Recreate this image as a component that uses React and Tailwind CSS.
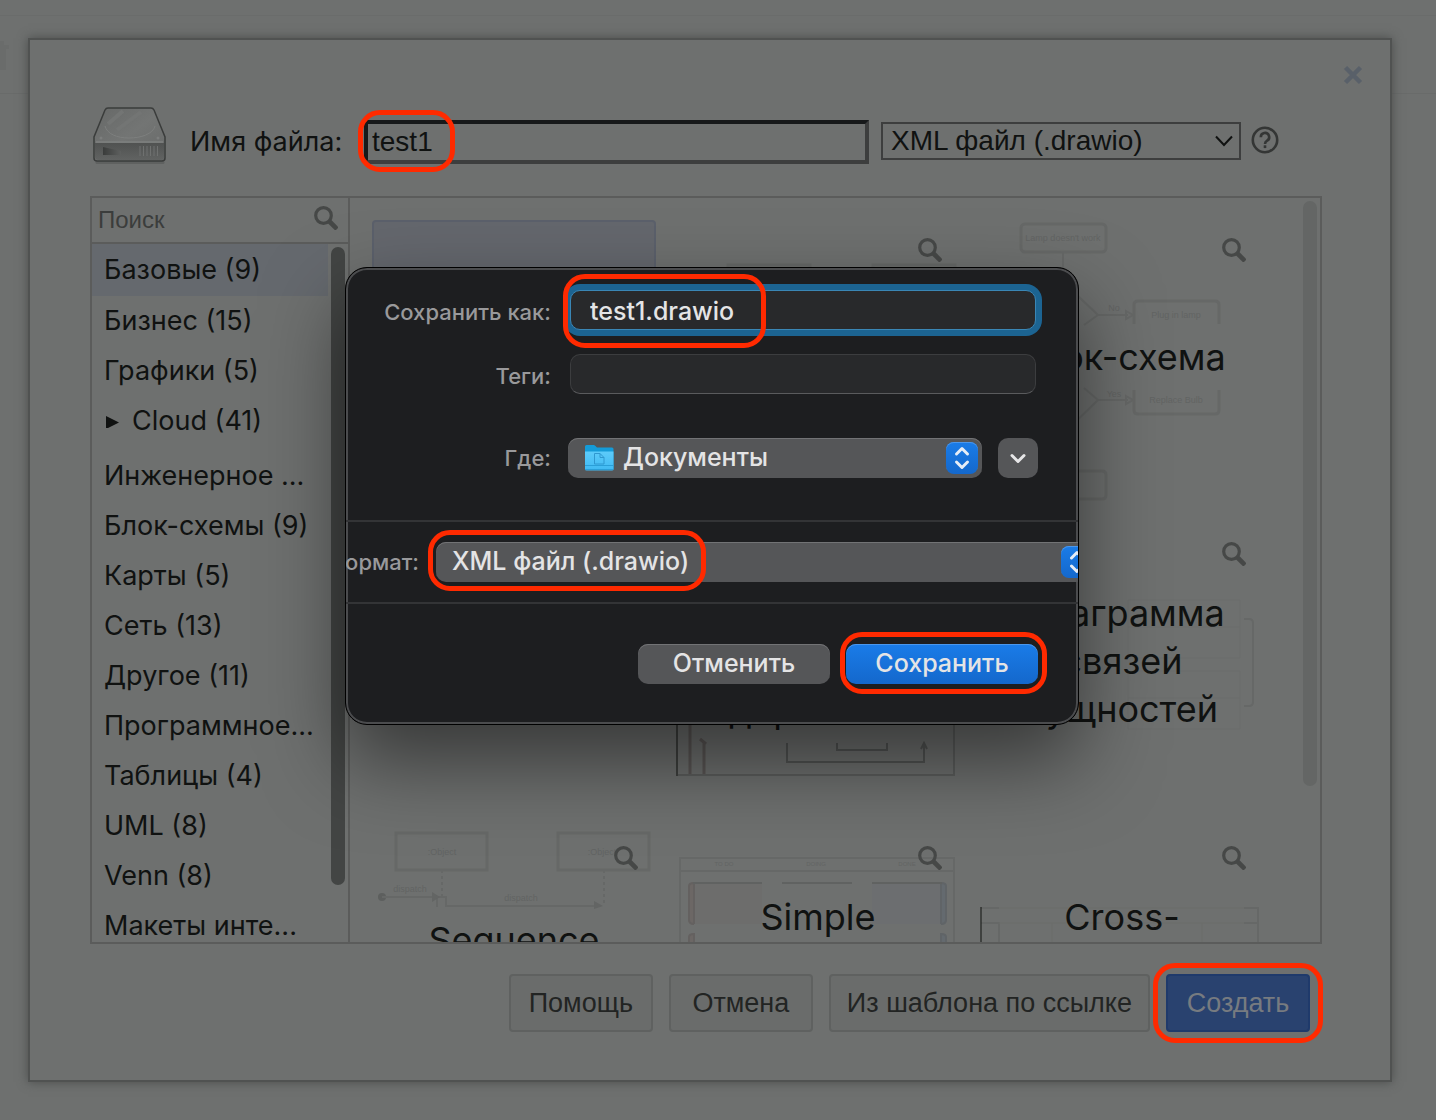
import React from "react";

const categories = [
  { name: "Базовые (9)", selected: true },
  { name: "Бизнес (15)" },
  { name: "Графики (5)" },
  { name: "Cloud (41)", expandable: true },
  { name: "Инженерное ..." },
  { name: "Блок-схемы (9)" },
  { name: "Карты (5)" },
  { name: "Сеть (13)" },
  { name: "Другое (11)" },
  { name: "Программное..." },
  { name: "Таблицы (4)" },
  { name: "UML (8)" },
  { name: "Venn (8)" },
  { name: "Макеты инте..." },
];

function Magnifier() {
  return (
    <svg viewBox="0 0 24 24" className="block size-6" fill="none" stroke="#464847" aria-hidden="true">
      <circle cx="9.500" cy="9.500" r="7.800" strokeWidth="3.200" />
      <path d="M15.500 15.500L23 23" strokeWidth="4.600" />
    </svg>
  );
}

function DriveIcon() {
  return (
    <svg viewBox="-3 0 76 60" className="block h-15 w-19 shrink-0" aria-hidden="true">
      <defs>
        <linearGradient id="drive-lid" x1="0" y1="0" x2="1" y2="1">
          <stop offset="0" stopColor="#666867" />
          <stop offset="0.5" stopColor="#737574" />
          <stop offset="1" stopColor="#676968" />
        </linearGradient>
        <linearGradient id="drive-front" x1="0" y1="0" x2="0" y2="1">
          <stop offset="0" stopColor="#505251" />
          <stop offset="1" stopColor="#616362" />
        </linearGradient>
        <linearGradient id="drive-slot" x1="0" y1="0" x2="1" y2="0">
          <stop offset="0" stopColor="#3a3c3b" />
          <stop offset="1" stopColor="#5e605f" />
        </linearGradient>
      </defs>
      <path d="M4 56.500h66" stroke="#5f6160" strokeWidth="3" strokeLinecap="round" />
      <path d="M15 2h43q2 0 3 2l11 27v21q0 3-3 3H4q-3 0-3-3V31L12 4q1-2 3-2z" fill="url(#drive-lid)" stroke="#3a3c3b" strokeWidth="1.500" />
      <path d="M2 37h69v14q0 3-3 3H5q-3 0-3-3z" fill="url(#drive-front)" />
      <path d="M3 36h67" stroke="#7e807f" strokeWidth="1.500" />
      <path d="M12 20c2 8 12 12 24 12s24-4 26-12" fill="none" stroke="#7d7f7e" />
      <path d="M15 18L30 5M24 24L48 6" stroke="#737574" strokeWidth="4" />
      <circle cx="8" cy="32" r="1.500" fill="#7c7e7d" />
      <circle cx="65" cy="32" r="1.500" fill="#7c7e7d" />
      <path d="M10 41l18 4v4H10z" fill="url(#drive-slot)" />
      <path d="M47 40v10M50.500 40v10M54 40v10M57.500 40v10M61 40v10M64.500 40v10" stroke="#6f7170" />
    </svg>
  );
}

function FolderIcon() {
  return (
    <svg viewBox="0 0 30 28" className="block h-7 w-[30px]" aria-hidden="true">
      <defs>
        <linearGradient id="folder-face" x1="0" y1="0" x2="0" y2="1">
          <stop offset="0" stopColor="#5dcbfa" />
          <stop offset="1" stopColor="#3fb9f2" />
        </linearGradient>
      </defs>
      <path d="M1 2.500Q1 1 2.500 1h7q1 0 2 1l1.500 1.500h15q1.500 0 1.500 1.500v20H1z" fill="#149bd8" />
      <path d="M1 7.500h28.500V25q0 1.500-1.500 1.500H2.500Q1 26.500 1 25z" fill="url(#folder-face)" />
      <path d="M1 21.500h28.500M1 25.500h28.500" stroke="#2a9fd8" />
      <path d="M10.500 9.500h5.500l4 4V20h-9.500zM16 9.500v4h4" fill="none" stroke="#2f98d0" />
    </svg>
  );
}

function Stepper() {
  return (
    <span className="flex h-8 w-8 shrink-0 items-center justify-center rounded-lg bg-linear-to-b from-[#1a7ce8] to-[#1468cc] shadow-[inset_0_1px_0_#4b97ec]">
      <svg viewBox="0 0 16 24" className="h-6 w-4" fill="none" stroke="#e6edf6" strokeWidth="3" strokeLinecap="round" strokeLinejoin="round" aria-hidden="true">
        <path d="M2.500 8L8 2.500 13.500 8M2.500 16L8 21.500 13.500 16" />
      </svg>
    </span>
  );
}

function Sketch({ children }) {
  return (
    <svg viewBox="0 0 284 284" className="absolute inset-0 size-full overflow-visible" fill="none" stroke="#666867" strokeWidth="3" fontFamily="Liberation Sans, sans-serif" fontSize="9" aria-hidden="true">
      {children}
    </svg>
  );
}

function SketchText({ x, y, children }) {
  return (
    <text x={x} y={y} fill="#626463" stroke="none" textAnchor="middle">
      {children}
    </text>
  );
}

const templates = [
  { id: "blank", selected: true },
  {
    id: "classes",
    zoom: true,
    art: <path d="M52 60V45h82v15M197 60V45h82v15" />,
  },
  {
    id: "flow",
    label: "Блок-схема",
    place: "pt-[113px]",
    zoom: true,
    art: (
      <>
        <rect x="41" y="4" width="85" height="28" rx="4" />
        <SketchText x={83} y={21}>Lamp doesn't work</SketchText>
        <path d="M83 32v30M83 62l35 33-14 10M118 95h30M104 168l14 12-35 34M118 180h30" strokeWidth="2" />
        <path d="M146 91l7 4-7 4zM146 176l7 4-7 4z" strokeWidth="2" />
        <path d="M154 104V85q0-4 4-4h77q4 0 4 4v19M154 170v20q0 4 4 4h77q4 0 4-4v-20" />
        <SketchText x={134} y={91}>No</SketchText>
        <SketchText x={134} y={177}>Yes</SketchText>
        <SketchText x={196} y={98}>Plug in lamp</SketchText>
        <SketchText x={196} y={183}>Replace Bulb</SketchText>
        <path d="M90 251h32q4 0 4 4v20q0 4-4 4H90" />
      </>
    ),
  },
  { id: "org" },
  {
    id: "swimlane",
    label: "дорожкой",
    place: "pt-[162px]",
    art: (
      <>
        <path d="M14 190v61M28 219v32M24 215l6 5" stroke="#5a5655" />
        <path d="M2 251h276V190" stroke="#5c5e5d" strokeWidth="2" />
        <path d="M111 219v19h137v-19M161 219v7h50v-7M245 225l3-6 3 6" stroke="#525453" strokeWidth="2" />
        <path d="M1 190v62" stroke="#101211" strokeWidth="1" />
      </>
    ),
  },
  {
    id: "entities",
    label: "Диаграмма связей сущностей",
    place: "pt-[65px]",
    zoom: true,
    art: (
      <>
        <path d="M148 76h112v58H148zM148 103h112M148 147h112v58H148zM148 174h112" stroke="#6b6d6c" strokeWidth="1" />
        <path d="M264 95h5q4 0 4 4v79q0 4-4 4h-5" strokeWidth="2" />
      </>
    ),
  },
  {
    id: "sequence",
    label: "Sequence",
    place: "pt-[88px]",
    zoom: true,
    art: (
      <>
        <path d="M24 5h91v37H24zM186 5h91v37h-91z" />
        <SketchText x={70} y={27}>:Object</SketchText>
        <SketchText x={230} y={27}>:Object</SketchText>
        <path d="M70 42v26M232 42v34" strokeDasharray="3 3" strokeWidth="2" />
        <circle cx="10" cy="69" r="4" fill="#5d5f5e" stroke="none" />
        <path d="M10 69h54M65 79V69h9v10M74 78h154" strokeWidth="2" />
        <path d="M60 64l8 5-8 5zM222 73l9 5-9 3z" fill="#636564" stroke="none" />
        <SketchText x={38} y={64}>dispatch</SketchText>
        <SketchText x={149} y={73}>dispatch</SketchText>
      </>
    ),
  },
  {
    id: "simple",
    label: "Simple",
    place: "pt-[65px]",
    zoom: true,
    art: (
      <>
        <path d="M4 120V30h274v90M4 43h274" strokeWidth="2" />
        <g fontSize="6">
          <SketchText x={48} y={38}>TO DO</SketchText>
          <SketchText x={140} y={38}>DOING</SketchText>
          <SketchText x={231} y={38}>DONE</SketchText>
        </g>
        <path d="M18 55h68v41H18z" fill="#6d6d6c" stroke="none" />
        <path d="M196 55h68v41h-68z" fill="#6c6e70" stroke="none" />
        <path d="M18 96q-5 0-5-4V58q0-3 5-3v41M18 120v-14q-5 0-5 3v11" fill="#6c6765" stroke="#646160" strokeWidth="2" />
        <path d="M265 96q5 0 5-4V58q0-3-5-3v41M265 120v-14q5 0 5 3v11" fill="#646a6f" stroke="#606467" strokeWidth="2" />
        <path d="M17 55h69M106 55h70M196 55h70" stroke="#606261" strokeWidth="2" />
      </>
    ),
  },
  {
    id: "cross",
    label: "Cross-",
    place: "pt-[65px]",
    zoom: true,
    art: (
      <>
        <path d="M1 80h18M264 80h14v40M1 95h18v25M264 95h14" strokeWidth="2" />
        <path d="M19 80h245M19 95h245M72 95v25M222 95v25" stroke="#6a6c6b" strokeWidth="1" />
        <path d="M1 79v41" stroke="#101211" strokeWidth="1" />
      </>
    ),
  },
];

function Template({ item }) {
  return (
    <div
      className={
        item.selected
          ? "relative flex h-71 justify-center rounded border-2 border-[#5b606b] bg-[#64676d]"
          : "relative flex h-71 items-start justify-center"
      }
    >
      {item.art && <Sketch>{item.art}</Sketch>}
      {item.label && (
        <span className={"relative w-60 text-center font-[Inter,sans-serif] text-[36px] leading-[48px] text-[#101211] " + item.place}>
          {item.label}
        </span>
      )}
      {item.zoom && (
        <button type="button" aria-label="Предпросмотр" className="absolute top-[18px] right-[18px]">
          <Magnifier />
        </button>
      )}
    </div>
  );
}

function Highlight({ className }) {
  return <span className={"pointer-events-none absolute rounded-[22px] border-[5px] border-[#ff2a00] " + className} />;
}

const plainButton =
  "h-[58px] rounded border-2 border-[#5f6160] bg-[#6a6c6b] text-[#222423] whitespace-nowrap";

const sheetLabel = "text-right text-[22px] font-medium text-[#99999b]";

function SaveSheet() {
  return (
    <form
      role="dialog"
      aria-label="Сохранение файла"
      onSubmit={(e) => e.preventDefault()}
      className="w-[734px] overflow-hidden rounded-[22px] border border-black bg-[#1d1e20] font-[Inter,sans-serif] text-[25px] text-[#e4e4e5] shadow-[inset_0_0_0_2px_#4b4c4e]"
    >
      <div className="grid grid-cols-[205px_1fr] items-center gap-x-[19px] gap-y-6 pt-[22px] pr-[42px]">
        <label htmlFor="save-as" className={"pt-1 " + sheetLabel}>Сохранить как:</label>
        <div className="relative">
          <input
            id="save-as"
            defaultValue="test1.drawio"
            className="block h-10 w-full rounded-[10px] border border-[#3a86b5] bg-[#28292b] px-[19px] pt-0.5 font-medium shadow-[0_0_0_6px_#1c6492] outline-none"
          />
          <Highlight className="-top-4 -left-[7px] h-[74px] w-[203px]" />
        </div>
        <label htmlFor="tags" className={"pt-1 " + sheetLabel}>Теги:</label>
        <input id="tags" className="block h-10 w-full rounded-[10px] border border-[#3c3d3f] border-b-[#5a5b5d] bg-[#28292b] px-5 outline-none" />
      </div>
      <div className="flex items-center pt-11 pr-10 pb-[42px]">
        <label htmlFor="folder" className={"w-[205px] " + sheetLabel}>Где:</label>
        <div className="relative ml-[17px] flex-1">
          <select id="folder" className="block h-10 w-full appearance-none rounded-[10px] bg-[#555658] pl-[55px] font-medium shadow-[inset_0_1px_0_#727375]">
            <option>Документы</option>
          </select>
          <span className="pointer-events-none absolute top-1.5 left-4"><FolderIcon /></span>
          <span className="pointer-events-none absolute top-1 right-1"><Stepper /></span>
        </div>
        <button type="button" aria-label="Развернуть" className="ml-4 flex size-10 items-center justify-center rounded-[10px] bg-[#555658]">
          <svg viewBox="0 0 16 16" className="size-4" fill="none" stroke="#e6e6e7" strokeWidth="3" strokeLinecap="round" strokeLinejoin="round" aria-hidden="true">
            <path d="M2 5.500L8 11.500 14 5.500" />
          </svg>
        </button>
      </div>
      <div className="flex items-center border-y-2 border-[#333436] py-5">
        <label htmlFor="format" className={"flex w-[73px] shrink-0 justify-end overflow-hidden " + sheetLabel}>Формат:</label>
        <div className="relative -mr-[19px] ml-[17px] flex-1">
          <select id="format" className="block h-10 w-full appearance-none rounded-[10px] bg-[#555658] pl-4 font-medium shadow-[inset_0_1px_0_#727375]">
            <option>XML файл (.drawio)</option>
          </select>
          <span className="pointer-events-none absolute top-1 right-1"><Stepper /></span>
          <Highlight className="-top-3 -left-2 h-[61px] w-[278px]" />
        </div>
      </div>
      <div className="flex justify-end gap-4 pt-10 pr-10 pb-10">
        <button type="button" className="h-10 w-48 rounded-[10px] bg-[#555658] font-medium shadow-[inset_0_1px_0_#727375]">Отменить</button>
        <div className="relative">
          <button type="submit" className="block h-10 w-48 rounded-[10px] bg-linear-to-b from-[#1a7ce8] to-[#1468cc] font-medium shadow-[inset_0_1px_0_#4b97ec]">Сохранить</button>
          <Highlight className="-top-3 -left-1.5 h-[62px] w-[207px]" />
        </div>
      </div>
    </form>
  );
}

export default function App() {
  return (
    <div className="relative min-h-screen overflow-hidden bg-[#6e706f] pt-[38px] pr-11 pb-[38px] pl-7 font-[Liberation_Sans,Arial,sans-serif] text-[#101211]">
      <div className="absolute inset-x-0 top-0 h-[94px] border-b border-[#696b6a]">
        <div className="h-4 border-b border-[#6a6c6b]" />
        <svg viewBox="0 0 10 30" className="mt-[25px] h-[30px] w-2.5" fill="#6a6c6b" aria-hidden="true">
          <path d="M0 0h4v4h5v4H6v21H0z" />
        </svg>
      </div>
      <main className="relative border-2 border-[#505251] bg-[#6e706f] pt-[66px] pr-[68px] pb-12 pl-15 shadow-[0_0_10px_#4a4c4b]">
        <button type="button" aria-label="Закрыть" className="absolute top-[25px] right-[27px]">
          <svg viewBox="0 0 20 20" className="size-5" stroke="#596069" strokeWidth="4.500" aria-hidden="true">
            <path d="M2.500 2.500l15 15M17.500 2.500l-15 15" />
          </svg>
        </button>

        <div className="flex items-center text-[28px]">
          <DriveIcon />
          <label htmlFor="file-name" className="ml-6 w-[174px] shrink-0 pt-3 font-[Inter,sans-serif] text-[27px]">Имя файла:</label>
          <div className="relative mt-3 flex-1">
            <input
              id="file-name"
              defaultValue="test1"
              className="block h-11 w-full border-4 border-t-[#17191a] border-r-[#3d3e3e] border-b-[#3d3e3e] border-l-[#17191a] bg-transparent px-1 outline-none"
            />
            <Highlight className="-top-[10px] -left-[6px] h-[62px] w-[97px]" />
          </div>
          <div className="relative mt-2.5 ml-3 w-[360px] shrink-0">
            <select aria-label="Тип файла" className="block h-[38px] w-full appearance-none border-2 border-[#3d3e3e] bg-transparent pl-2 leading-8">
              <option>XML файл (.drawio)</option>
            </select>
            <svg viewBox="0 0 18 12" className="pointer-events-none absolute top-[13px] right-2 h-3 w-[18px]" fill="none" stroke="#101211" strokeWidth="2" aria-hidden="true">
              <path d="M1 1.500l8 8.500 8-8.500" />
            </svg>
          </div>
          <a href="#help" aria-label="Справка" className="mt-2 mr-[43px] ml-[10px] block shrink-0">
            <svg viewBox="0 0 28 28" className="size-7" fill="none" stroke="#343635" strokeWidth="2.600" aria-hidden="true">
              <circle cx="14" cy="14" r="12.200" />
              <path d="M9.800 11.200a4.200 4.200 0 1 1 6.300 3.500q-2.100 1.200-2.100 3.300" />
              <path d="M14 19.300v2.800" />
            </svg>
          </a>
        </div>

        <div className="mt-[30px] flex h-[748px] border-2 border-[#5b5c5b]">
          <aside className="flex w-[258px] shrink-0 flex-col border-r-2 border-[#5b5c5b]">
            <div className="flex h-[46px] shrink-0 items-center border-b-2 border-[#5b5c5b] pr-2.5 pl-1.5">
              <input aria-label="Поиск" placeholder="Поиск" className="min-w-0 flex-1 bg-transparent text-2xl outline-none placeholder:text-[#3b3d3c]" />
              <span className="pb-1"><Magnifier /></span>
            </div>
            <div className="flex min-h-0 flex-1">
              <ul className="min-w-0 flex-1 overflow-hidden font-[Inter,sans-serif] text-[27px]">
                {categories.map((c) => (
                  <li key={c.name} className={c.expandable ? "mb-[5px]" : ""}>
                    <button
                      type="button"
                      className={
                        c.selected
                          ? "flex h-[52px] w-full items-center bg-[#65696e] pl-3 whitespace-nowrap"
                          : "flex h-[50px] w-full items-center pl-3 whitespace-nowrap"
                      }
                    >
                      {c.expandable && (
                        <svg viewBox="0 0 14 14" className="mr-3 ml-0.5 size-3.5" fill="#101211" aria-hidden="true">
                          <path d="M0 2l13 6.500L0 15z" />
                        </svg>
                      )}
                      {c.name}
                    </button>
                  </li>
                ))}
              </ul>
              <div className="mt-[3px] mr-[3px] ml-[3px] h-[638px] w-3.5 shrink-0 rounded-full bg-[#434544]" />
            </div>
          </aside>
          <section className="flex min-w-0 flex-1 overflow-hidden">
            <div className="grid min-w-0 flex-1 grid-cols-3 content-start gap-5 pt-[22px] pr-[39px] pl-[22px]">
              {templates.map((t) => (
                <Template key={t.id} item={t} />
              ))}
            </div>
            <div className="mt-[3px] mr-[3px] h-[585px] w-3.5 shrink-0 rounded-full bg-[#646665]" />
          </section>
        </div>

        <div className="mt-[30px] flex justify-end gap-4 pr-3 text-[27px]">
          <button type="button" className={plainButton + " w-36"}>Помощь</button>
          <button type="button" className={plainButton + " w-36"}>Отмена</button>
          <button type="button" className={plainButton + " px-4"}>Из шаблона по ссылке</button>
          <div className="relative">
            <button type="button" className="block h-[58px] w-36 rounded border-2 border-[#1f3a6b] bg-[#29426f] text-[#777b80]">Создать</button>
            <Highlight className="-top-[11px] -left-[13px] h-[80px] w-[170px]" />
          </div>
        </div>
      </main>

      <div className="absolute inset-x-0 top-[267px] flex justify-center pr-3">
        <div className="rounded-[22px] shadow-[0_36px_80px_rgba(0,0,0,0.5)]">
          <SaveSheet />
        </div>
      </div>
    </div>
  );
}
